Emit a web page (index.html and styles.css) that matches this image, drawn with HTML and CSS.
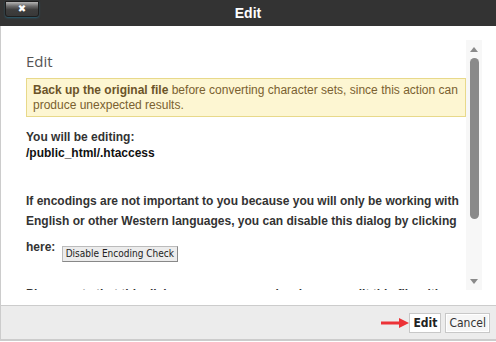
FILE: index.html
```html
<!DOCTYPE html>
<html lang="en">
<head>
    <meta charset="UTF-8">
    <meta name="viewport" content="width=device-width, initial-scale=1.0">
    <title>Edit</title>
    <link rel="stylesheet" href="styles.css">
</head>
<body>
    <div class="dialog">
        <div class="titlebar">
            <button class="close-btn" title="Close">&#x2716;</button>
            <span class="title">Edit</span>
        </div>

        <div class="dialog-body">
            <div class="content">
                <h3>Edit</h3>
                <div class="warning">
                    <strong>Back up the original file</strong> before converting character sets, since this action can produce unexpected results.
                </div>

                <p class="editing">
                    You will be editing:<br>
                    <span class="path">/public_html/.htaccess</span>
                </p>

                <p class="info">If encodings are not important to you because you will only be working with English or other Western languages, you can disable this dialog by clicking</p>
                <p class="info here">here: <button class="small-btn">Disable Encoding Check</button></p>

                <p class="info">Please note that this dialog may appear again when you edit this file with another encoding.</p>
            </div>
            <div class="scrollbar">
                <span class="arrow-up"></span>
                <span class="thumb"></span>
                <span class="track"></span>
                <span class="arrow-down"></span>
            </div>
        </div>

        <div class="footer">
            <svg class="pointer" width="28" height="10" viewBox="0 0 28 10">
                <line x1="0" y1="5" x2="20" y2="5" stroke="#ec3237" stroke-width="3"/>
                <polygon points="18,0 28,5 18,10" fill="#ec3237"/>
            </svg>
            <button class="btn btn-primary">Edit</button>
            <button class="btn">Cancel</button>
        </div>
    </div>
</body>
</html>
```

FILE: styles.css
```css
body {
    margin: 0;
    font-family: "Liberation Sans", Arial, sans-serif;
    font-size: 12px;
    background-color: #fff;
}

.dialog {
    width: 496px;
    height: 342px;
    display: flex;
    flex-direction: column;
}

/* dark title bar */
.titlebar {
    height: 26px;
    background-color: #333;
    display: grid;
    grid-template-columns: 1fr auto 1fr;
    align-items: start;
}

.close-btn {
    justify-self: start;
    margin: 1px 0 0 5px;
    width: 34px;
    height: 16px;
    padding: 0;
    border: 1px solid #1e1e1e;
    border-radius: 0 0 3px 3px;
    background: linear-gradient(#b5b5b5 0%, #6a6a6a 30%, #3e3e3e 55%, #383838 100%);
    box-shadow: 0 1px 2px #2b5d70;
    color: #fff;
    font-size: 10px;
    font-weight: bold;
    line-height: 14px;
    font-family: "DejaVu Sans", sans-serif;
}

.title {
    color: #fff;
    font-weight: bold;
    font-size: 14px;
    line-height: 26px;
}

/* main area */
.dialog-body {
    height: 250px;
    display: flex;
    padding: 14px 14px 15px 0;
    border-left: 1px solid #ccc;
    background-color: #fff;
}

.content {
    flex: 1;
    overflow: hidden;
    padding: 10px 0 0 25px;
    color: #333;
}

h3 {
    margin: 0 0 6px;
    font-family: "Open Sans", sans-serif;
    font-weight: normal;
    font-size: 15px;
    line-height: 22px;
    color: #555;
}

.warning {
    background-color: #fdf6d2;
    border: 1px solid #e8d98a;
    color: #7a6130;
    padding: 4px 6px 3px;
    line-height: 15px;
}

.warning strong {
    color: #6b5429;
}

.editing {
    margin: 12px 0 0;
    font-weight: bold;
    line-height: 16px;
    color: #333;
}

.path {
    color: #111;
}

.info {
    margin: 30px 0 0;
    font-weight: bold;
    line-height: 20px;
}

.info.here {
    margin-top: 6px;
}

.small-btn {
    vertical-align: -6px;
    margin-left: 3px;
    padding: 1px 3px 2px;
    font-family: "DejaVu Sans Condensed", "DejaVu Sans", sans-serif;
    font-stretch: condensed;
    font-size: 10px;
    color: #222;
    background-color: #ececec;
    border: 1px solid #bbb;
    border-right-color: #888;
    border-bottom-color: #888;
}

.info.here + .info {
    margin-top: 22px;
}

/* fake scrollbar */
.scrollbar {
    width: 16px;
    background-color: #f7f7f7;
    display: flex;
    flex-direction: column;
    align-items: center;
}

.arrow-up,
.arrow-down {
    width: 0;
    height: 0;
    border-left: 4px solid transparent;
    border-right: 4px solid transparent;
}

.arrow-up {
    margin-top: 7px;
    border-bottom: 5px solid #8a8a8a;
}

.arrow-down {
    margin: 0 0 6px;
    border-top: 5px solid #8a8a8a;
}

.thumb {
    margin-top: 6px;
    width: 9px;
    height: 161px;
    border-radius: 5px;
    background-color: #8a8a8a;
}

.track {
    flex: 1;
}

/* bottom buttons */
.footer {
    height: 33px;
    border-top: 1px solid #ccc;
    border-bottom: 2px solid #ccc;
    border-left: 1px solid #ccc;
    background-color: #ececec;
    display: flex;
    align-items: center;
    justify-content: flex-end;
    padding-right: 6px;
}

.pointer {
    margin-right: 0;
}

.btn {
    height: 20px;
    padding: 0 3px;
    margin-left: 4px;
    font-family: "DejaVu Sans Condensed", "DejaVu Sans", sans-serif;
    font-stretch: condensed;
    font-size: 12px;
    color: #333;
    background-color: #f6f6f6;
    border: 1px solid #c8c8c8;
    box-shadow: 0 0 0 1px #fff inset;
}

.btn-primary {
    margin-left: 0;
    font-weight: bold;
    background-color: #fff;
    color: #222;
}
```
